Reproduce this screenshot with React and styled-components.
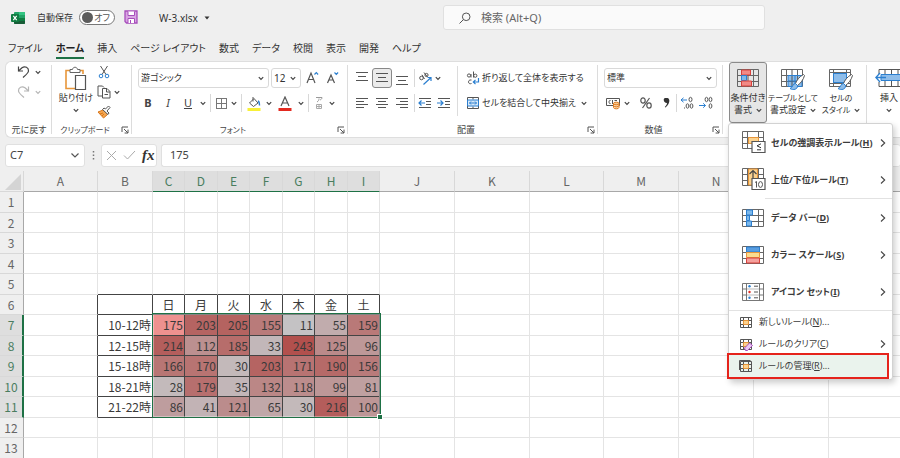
import React from "react";
import styled, { createGlobalStyle, css } from "styled-components";

const GlobalStyle = createGlobalStyle`
  * { box-sizing: border-box; }
  body {
    margin: 0;
    background: #efefef;
    color: #333;
    font-family: "Noto Sans", "Noto Sans CJK JP", sans-serif;
    font-size: 10px;
    font-feature-settings: "palt";
    line-height: 12px;
  }
  button, input, select {
    font: inherit;
    font-feature-settings: inherit;
    color: inherit;
    background: none;
    border: 0;
    padding: 0;
    margin: 0;
    outline: none;
  }
  svg { flex: none; }
`;

const green = "#1e7145";
const line = "#444";

const App = styled.div`
  height: 100vh;
  overflow: hidden;
  display: flex;
  flex-direction: column;
`;

/* Title bar */
const TitleBar = styled.header`
  display: grid;
  grid-template-columns: 443px minmax(0, 322px) 1fr;
  align-items: center;
  height: 35px;
  flex: none;
`;
const TitleLeft = styled.div`
  display: flex;
  align-items: center;
  padding-left: 11px;
`;
const AutoSave = styled.label`
  display: flex;
  align-items: center;
  gap: 6px;
  margin: 0 9px 0 12px;
  font-size: 9px;
`;
const Switch = styled.input.attrs({ type: "checkbox" })`
  appearance: none;
  width: 36px;
  height: 15px;
  border: 1px solid #777;
  border-radius: 8px;
  background: #fff;
  display: flex;
  align-items: center;
  padding: 0 4px 0 2px;
  justify-content: space-between;
  &::before {
    content: "";
    width: 11px;
    height: 11px;
    border-radius: 50%;
    background: #5c5c5c;
  }
  &::after {
    content: "オフ";
    font-size: 9px;
    color: #555;
  }
`;
const FileName = styled.button`
  display: flex;
  align-items: center;
  gap: 6px;
  margin-left: 21px;
`;
const Search = styled.label`
  display: flex;
  align-items: center;
  gap: 10px;
  height: 25px;
  padding: 0 15px;
  background: #fafafa;
  border: 1px solid #e0e0e0;
  border-radius: 3px;
  input { flex: 1; min-width: 0; font-size: 11px; }
  input::placeholder { color: #666; opacity: 1; }
`;

/* Tabs */
const Tabs = styled.nav`
  display: flex;
  gap: 13px;
  height: 26px;
  padding: 4px 8px 0;
  flex: none;
`;
const Tab = styled.a`
  color: #333;
  text-decoration: none;
  font-size: 10px;
  line-height: 18px;
  height: 20px;
  white-space: nowrap;
  ${(p) => p.$active && css`font-weight: 700; border-bottom: 2px solid ${green}; color: #222;`}
`;

/* Ribbon */
const Ribbon = styled.div`
  display: flex;
  height: 77px;
  flex: none;
  margin-left: 5px;
  background: #fff;
  border: 1px solid #dedede;
  border-right: 0;
  border-radius: 6px 0 0 6px;
`;
const Group = styled.section`
  display: flex;
  flex-direction: column;
  flex: none;
  width: ${(p) => p.$w}px;
  position: relative;
  &::after {
    content: "";
    position: absolute;
    right: 0;
    top: 3px;
    bottom: 3px;
    width: 1px;
    background: #dcdcdc;
  }
`;
const GroupBody = styled.div`
  display: flex;
  flex: 1;
  padding-left: ${(p) => p.$pad || 0}px;
`;
const GroupLabel = styled.div`
  display: flex;
  justify-content: center;
  align-items: center;
  height: 15px;
  font-size: ${(p) => (p.$kana ? 8 : 9)}px;
  color: #444;
  white-space: nowrap;
  span { flex: 1; text-align: center; }
  button { display: flex; justify-content: center; flex: none; width: 14px; }
`;
const Rows = styled.div`
  display: flex;
  flex-direction: column;
  gap: 5px;
  padding-top: 6px;
  flex: none;
  ${(p) => p.$divided && css`
    width: 106px;
    background: linear-gradient(#dcdcdc, #dcdcdc) right 4px / 1px 50px no-repeat;
  `}
`;
const Row = styled.div`
  display: flex;
  align-items: center;
  height: 20px;
  gap: ${(p) => p.$gap || 0}px;
`;
const Tool = styled.button`
  display: flex;
  align-items: center;
  justify-content: center;
  flex: none;
  width: ${(p) => p.$w || 20}px;
  height: 20px;
  color: #444;
  font-size: 11px;
  ${(p) => p.$on && css`background: #ebebeb; border: 1px solid #888; border-radius: 3px;`}
`;
const TextTool = styled.button`
  display: flex;
  align-items: center;
  gap: 2px;
  height: 20px;
  min-width: ${(p) => p.$w || 0}px;
  font-size: 9px;
  white-space: nowrap;
`;
const Divider = styled.span`
  width: 1px;
  height: 18px;
  margin: 0 2px;
  background: #d8d8d8;
`;
const SelectBox = styled.div`
  display: flex;
  align-items: center;
  height: 20px;
  width: ${(p) => p.$w}px;
  padding: 0 4px 0 2px;
  border: 1px solid #d9d9d9;
  border-radius: 3px;
  background: #fff;
  font-size: ${(p) => (p.$kana ? 9 : 10)}px;
  select { appearance: none; flex: 1; min-width: 0; height: 100%; }
  svg { pointer-events: none; }
`;
const Stack = styled.div`
  display: flex;
  flex-direction: column;
`;
const SmallTool = styled(Tool)`
  width: ${(p) => p.$w || 16}px;
`;
const BigTool = styled.button`
  display: flex;
  flex-direction: column;
  align-items: center;
  flex: none;
  width: ${(p) => p.$w}px;
  height: 61px;
  padding-top: 4px;
  font-size: 9px;
  line-height: 12px;
  white-space: nowrap;
  border: 1px solid transparent;
  ${(p) => p.$on && css`background: #e6e6e6; border-color: #8a8a8a; border-radius: 3px;`}
`;
const BigIcon = styled.span`
  display: flex;
  align-items: center;
  justify-content: center;
  height: 22px;
  margin-bottom: 3px;
`;
const BigLabel = styled.span`
  display: flex;
  align-items: center;
  justify-content: center;
  gap: 4px;
  height: 12px;
  font-size: ${(p) => (p.$kana ? 8 : 9)}px;
`;
const Anchor = styled.div`
  position: relative;
  flex: none;
`;

/* Drop-down menu */
const Menu = styled.div`
  position: absolute;
  z-index: 5;
  top: 61px;
  left: -1px;
  width: 165px;
  background: #fff;
  border: 1px solid #d2d2d2;
  border-radius: 3px;
  box-shadow: 2px 3px 6px rgba(0, 0, 0, 0.2);
`;
const MenuItem = styled.button`
  display: flex;
  align-items: center;
  width: 100%;
  height: ${(p) => (p.$small ? 22 : 37)}px;
  padding: ${(p) => (p.$small ? "0 6px 0 10px" : "0 6px 0 13px")};
  gap: ${(p) => (p.$small ? 6 : 4)}px;
  font-weight: ${(p) => (p.$small ? 400 : 700)};
  font-size: 9px;
  white-space: nowrap;
  text-align: left;
  color: #3c3c3c;
  span { flex: 1; }
  ${(p) => p.$marked && css`
    width: 162px;
    height: 26px;
    margin: -2px 0 0 -2px;
    padding-left: 10px;
    background: #eaf3ed;
    border: 2px solid #e5231b;
  `}
`;
const MenuRule = styled.hr`
  height: 1px;
  border: 0;
  margin: 0 0 0 ${(p) => p.$inset || 0}px;
  background: #e2e2e2;
`;

/* Formula bar */
const FormulaBar = styled.div`
  display: flex;
  align-items: center;
  height: 33px;
  flex: none;
  padding-left: 5px;
  padding-top: 1px;
  color: #444;
`;
const Box = styled.div`
  display: flex;
  align-items: center;
  height: 23px;
  background: #fff;
  border: 1px solid #e0e0e0;
  border-radius: 3px;
  ${(p) => (p.$w ? css`width: ${p.$w}px; flex: none;` : css`flex: 1; border-right: 0; margin-left: 4px;`)}
  padding: 0 ${(p) => p.$pad}px;
  input { flex: 1; min-width: 0; font-size: 11px; }
  button { display: flex; }
`;
const Dots = styled.span`
  width: 16px;
  display: flex;
  justify-content: center;
`;
const FxButton = styled.button`
  font-family: "Liberation Serif", serif;
  font-style: italic;
  font-weight: 700;
  font-size: 15px;
  color: #333;
`;

/* Sheet */
const SheetArea = styled.main`
  flex: 1;
  min-height: 0;
  overflow: hidden;
  background: #fff;
`;
const Sheet = styled.table`
  table-layout: fixed;
  border-collapse: separate;
  border-spacing: 0;
  width: max-content;
  font-family: "Noto Sans CJK JP", sans-serif;
  font-feature-settings: normal;
  font-size: 12px;
  line-height: 14px;
`;
const SheetRow = styled.tr`
  height: ${(p) => (p.$alt ? 20 : 21)}px;
`;
const Head = styled.th`
  padding: 0;
  font-weight: 400;
  color: ${(p) => (p.$on ? "#4a7d5f" : "#666")};
  background: ${(p) => (p.$on ? "#dedede" : "#efefef")};
  border-right: 1px solid #d8d8d8;
  border-bottom: 1px solid #d8d8d8;
  ${(p) => p.$axis === "col" && css`border-bottom: 1px solid ${p.$on ? green : "#a8a8a8"};`}
  ${(p) => p.$axis === "row" && css`
    border-right: ${p.$on ? 2 : 1}px solid ${p.$on ? green : "#a8a8a8"};
    padding-right: ${p.$on ? 0 : 1}px;
  `}
`;
const Corner = styled.div`
  width: 0;
  height: 0;
  margin: 2px 2px 0 auto;
  border-left: 16px solid transparent;
  border-bottom: 16px solid #d4d4d4;
`;
const Cell = styled.td`
  position: relative;
  padding: 0 ${(p) => (p.$align === "center" ? 0 : 1)}px 0 0;
  text-align: ${(p) => p.$align || "right"};
  color: #3a3a3a;
  white-space: nowrap;
  background: ${(p) => p.$fill || "#fff"};
  border-right: 1px solid ${(p) => (p.$right ? line : "#e4e4e4")};
  border-bottom: 1px solid ${(p) => (p.$bottom ? line : "#e4e4e4")};
`;
const Selection = styled.div`
  position: absolute;
  z-index: 1;
  top: -2px;
  left: -1px;
  width: 229px;
  height: 105px;
  border: 1px solid ${green};
  box-shadow: inset 0 0 0 1px rgba(255, 255, 255, 0.35);
  &::after {
    content: "";
    position: absolute;
    right: -2px;
    bottom: -2px;
    width: 4px;
    height: 4px;
    background: ${green};
    outline: 1px solid #fff;
  }
`;

/* Icons */
const Ic = ({ w = 14, h = 14, children, vb }) => (
  <svg width={w} height={h} viewBox={vb || `0 0 ${w} ${h}`} fill="none" stroke="#555" strokeWidth="1" aria-hidden="true">
    {children}
  </svg>
);
const Chevron = ({ color = "#444" }) => (
  <Ic w={6} h={5}><path d="M0.8 1.2 3 3.5 5.2 1.2" stroke={color} strokeWidth="1.2" /></Ic>
);
const Right = () => (
  <Ic w={6} h={10}><path d="M1 1.5 4.7 5 1 8.5" stroke="#444" strokeWidth="1.1" /></Ic>
);
const Drop = ({ label, color }) => (
  <Tool $w={10} aria-label={label}><Chevron color={color} /></Tool>
);
const Launcher = ({ label }) => (
  <button aria-label={label}>
    <Ic w={8} h={8}><path d="M1 6V1h6M3 3l4 4M7 3.6V7H3.6" /></Ic>
  </button>
);
const Lines = ({ rows, h = 14 }) => (
  <Ic w={12} h={h}>
    {rows.map(([x1, x2, y]) => <path key={y} d={`M${x1} ${y}.5H${x2}`} stroke="#555" />)}
  </Ic>
);
const ExcelIcon = () => (
  <Ic w={14} h={14}>
    <g stroke="none">
      <rect x="3" y="1" width="11" height="12" rx="1" fill="#21a366" />
      <path d="M8 1h5a1 1 0 0 1 1 1v2H8z" fill="#33c481" />
      <path d="M3 7h11v5a1 1 0 0 1-1 1H4a1 1 0 0 1-1-1z" fill="#185c37" />
      <path d="M8 7h6v3H8z" fill="#107c41" />
      <rect x="0" y="3" width="8" height="8" rx="1" fill="#107c41" />
    </g>
    <path d="M2.3 4.8 5.7 9.2M5.7 4.8 2.3 9.2" stroke="#fff" strokeWidth="1.2" />
  </Ic>
);
const SaveIcon = () => (
  <Ic w={14} h={14}>
    <path d="M1 1h12v12H2.5L1 11.5z" fill="#d9a5e3" stroke="#a64dbb" strokeWidth="1.3" />
    <path d="M4 1.5v4h6.500v-4" fill="#fff" stroke="#a64dbb" />
    <path d="M4 13V8.500h6.500V13" fill="#fff" stroke="#a64dbb" />
    <path d="M6.500 10v3" stroke="#a64dbb" />
  </Ic>
);
const UndoIcon = ({ flip, color }) => (
  <Ic w={13} h={14} vb="0 0 13 14">
    <g transform={flip ? "translate(13 0) scale(-1 1)" : undefined} stroke={color} strokeWidth="1.2">
      <path d="M1.500 1.500v4.500H6" />
      <path d="M1.500 6 5 2.800C8 .5 11.800 2.500 11.500 6c-.2 2-1.500 3-5.500 6.500" />
    </g>
  </Ic>
);
const PasteIcon = () => (
  <Ic w={24} h={25}>
    <path d="M6 4.500H2v18h9M16 4.500h3V8" stroke="#e8963a" strokeWidth="1.600" />
    <path d="M6 6.500v-3h2.500c.3-3 4.700-3 5 0H16v3z" fill="#fff" stroke="#666" />
    <path d="M11.500 9.500h10v14h-10z" fill="#fff" stroke="#555" strokeWidth="1.200" />
  </Ic>
);
const CutIcon = () => (
  <Ic w={12} h={14}>
    <path d="M2.500 1 8 9.500M9.500 1 4 9.500" />
    <circle cx="3" cy="11" r="1.800" stroke="#2b7fd0" />
    <circle cx="9" cy="11" r="1.800" stroke="#2b7fd0" />
  </Ic>
);
const CopyIcon = () => (
  <Ic w={14} h={14}>
    <path d="M5 11H1V1h4.500l1.500 1.500" />
    <path d="M5.500 3.500h4.500l3 3V13H5.500z" fill="#fff" />
    <path d="M9.500 3.500V7H13M7.500 9.500h3.500" />
  </Ic>
);
const BrushIcon = () => (
  <Ic w={14} h={14}>
    <path d="m1 7 5-2 4.500 4.500L6.500 13z" fill="#f3a650" stroke="#d9761a" />
    <path d="m5.500 4.500 5.500 5 1-1.500-2-2 3-3.500-1.500-1.500-3 3-1.500-1z" fill="#fff" />
    <path d="m3 9 3-1M5 11l2-2" stroke="#d9761a" />
  </Ic>
);
const BordersIcon = () => (
  <Ic w={13} h={13}><path d="M1 1.500h11M1 11.500h11M1.500 1v11M11.500 1v11M6.500 1v11M1 6.500h11" stroke="#777" /></Ic>
);
const FillIcon = () => (
  <Ic w={14} h={15}>
    <path d="m2.500 7 4.500-4.500L11 7 6.500 10.500z" /><path d="M6 1v4.500" />
    <path d="M11 5c1.500.5 1.500 2 1.500 4.500" stroke="#2b7fd0" strokeWidth="1.400" />
    <rect x="0.500" y="12" width="13" height="3" fill="#f8f037" stroke="none" />
  </Ic>
);
const FontColorIcon = () => (
  <Ic w={14} h={15}>
    <path d="m3 10 4-9 4 9M4.500 7h5" strokeWidth="1.200" />
    <rect x="0.500" y="12" width="13" height="3" fill="#e3291f" stroke="none" />
  </Ic>
);
const FontSizeIcon = ({ up }) => (
  <Ic w={13} h={14}>
    <path d={up ? "m1 12 4-10 4 10M2.500 8.500h5" : "m1.500 12 3.500-8 3.500 8M3 9h4"} strokeWidth="1.200" />
    <path d={up ? "m8.500 3.500 1.800-1.800 1.800 1.800" : "m8.500 1.500 1.800 1.800 1.800-1.800"} stroke="#2b7fd0" strokeWidth="1.200" />
  </Ic>
);
const PhoneticIcon = () => (
  <Ic w={10} h={14}>
    <path d="M2 1.500h6c0 1.500-1 2-2 2.500M5 2.500C5 4 4.500 5 3 6" stroke="#999" />
    <path d="M2.500 8.500h5v4h-5zM2 10.500h6M5 8v5" stroke="#aaa" />
  </Ic>
);
const OrientIcon = () => (
  <Ic w={15} h={15}>
    <circle cx="3.500" cy="7" r="1.800" /><path d="m4 3.800 2.500 4.200M6 1.500l3.500 4.500" />
    <circle cx="8.500" cy="4" r="1.600" />
    <path d="M5.500 13.500 13 6.500M9.500 6.500h3.500v3.500" stroke="#2b7fd0" strokeWidth="1.200" />
  </Ic>
);
const IndentIcon = ({ out }) => (
  <Ic w={14} h={12}>
    <path d="M1 1.500h12M8 4.500h5M8 7.500h5M1 10.500h12" />
    <path d={out ? "M1 6h6M3.500 3.500 1 6l2.500 2.500" : "M0 6h6M3.500 3.500 6 6 3.500 8.500"} stroke="#2b7fd0" strokeWidth="1.200" />
  </Ic>
);
const WrapIcon = () => (
  <Ic w={14} h={14}>
    <circle cx="3" cy="4.500" r="1.600" /><path d="M5 3v3.500M7.500.5v6" />
    <circle cx="9.300" cy="4.700" r="1.600" /><path d="M5.500 9c-4-1-4 5 0 3.500" />
    <path d="M12.500 7v4H7.500M9.500 8.800 7.300 11l2.200 2.200" stroke="#2b7fd0" strokeWidth="1.200" />
  </Ic>
);
const MergeIcon = () => (
  <Ic w={14} h={14}>
    <path d="M1.500 1.500h11v11h-11zM7 1.500v2M7 10.500v2" />
    <path d="M1.500 4h11v6h-11z" fill="#d6e8f8" stroke="#2b7fd0" />
    <path d="M3.500 7h7M5 5.500 3.500 7 5 8.500M9 5.500 10.500 7 9 8.500" stroke="#2b7fd0" />
  </Ic>
);
const CurrencyIcon = () => (
  <Ic w={14} h={14}>
    <path d="M.5 2.500h13v7H.5z" /><path d="M4.500 4.500c-2-1-2 4 0 3M6.500 4v4M8.500 4.500H11" />
    <path d="M7.500 7.500v4c0 1.800 5.500 1.800 5.500 0v-4z" fill="#fbd9b0" stroke="#e07b20" />
    <ellipse cx="10.250" cy="7.500" rx="2.800" ry="1.300" fill="#f9c78a" stroke="#e07b20" />
    <path d="M7.500 9.500c0 1.800 5.500 1.800 5.500 0" stroke="#e07b20" />
  </Ic>
);
const PercentIcon = () => (
  <Ic w={14} h={14}>
    <ellipse cx="4" cy="4.500" rx="2.200" ry="2.600" strokeWidth="1.200" />
    <ellipse cx="10" cy="9.500" rx="2.200" ry="2.600" strokeWidth="1.200" />
    <path d="M10.500 2 3.500 12" strokeWidth="1.200" />
  </Ic>
);
const CommaIcon = () => (
  <Ic w={8} h={12}><path d="M2 1h2.500C7 1.500 7.500 6 2.500 10.500L1.800 10C3.500 8 4 7 4 6 .5 6-.2 1.800 2 1z" fill="#333" stroke="none" /></Ic>
);
const DecimalIcon = ({ more }) => (
  <Ic w={14} h={14}>
    {!more && <><ellipse cx="10.500" cy="3.500" rx="1.500" ry="2.200" /><path d="M1 4h6M3.500 1.800 1 4l2.500 2.200" stroke="#2b7fd0" /></>}
    {more && <><ellipse cx="7.500" cy="3.500" rx="1.400" ry="2.200" /><ellipse cx="11.500" cy="3.500" rx="1.400" ry="2.200" /><path d="M0 9.500h6.500M4.200 7.300l2.300 2.200-2.300 2.200" stroke="#2b7fd0" /></>}
    {!more && <ellipse cx="7.500" cy="10" rx="1.400" ry="2.200" />}
    <ellipse cx="11.500" cy="10" rx="1.400" ry="2.200" />
    {!more && <path d="M4 12h1" />}
  </Ic>
);
const Grid = ({ w = 22, h = 18 }) => (
  <path
    d={`M.5.5h${w - 1}v${h - 1}H.5zM.5 ${Math.round(h / 3)}.5h${w - 1}M.5 ${Math.round((h * 2) / 3)}.5h${w - 1}M5.500.5v${h - 1}M${w - 5.5}.5v${h - 1}`}
    stroke="#666"
  />
);
const CondIcon = () => (
  <Ic w={22} h={18}>
    <Grid />
    <path d="M11 .5v17" />
    <path d="M4.500 1h9v5h-9z" fill="#f08a86" stroke="#d8403b" />
    <path d="M4.500 6.500h5v5h-5z" fill="#7db8ea" stroke="#2b7fd0" />
    <path d="M4.500 12h10v5h-10z" fill="#f08a86" stroke="#d8403b" />
  </Ic>
);
const Brush = () => (
  <>
    <path d="M22.500 5.500c-4 2-7 6-8 9l2 2c3-2 6-6 7-10z" fill="#fff" stroke="#555" />
    <path d="M14.500 14.500c-3 0-2.500 4-5.500 5 3 2 8 1 7.500-3z" fill="#8ebdea" stroke="#2b7fd0" />
  </>
);
const TableIcon = () => (
  <Ic w={24} h={24} vb="0 -3 24 24">
    <path d="M7 6h14v11H7z" fill="#8ebdea" stroke="none" />
    <Grid />
    <path d="M11 .5v17" />
    <path d="M7 6.500h14v11H7zM14 6v11M7 12h14" stroke="#2b7fd0" />
    <Brush />
  </Ic>
);
const CellStyleIcon = () => (
  <Ic w={24} h={24} vb="0 -3 24 24">
    <path d="M.5.500h21v17H.5zM.5 3.500h21M.5 14.500h21M4.500.5v17M17.500.5v17" stroke="#666" />
    <path d="M4.500 4.500h13v9h-13z" fill="#8ebdea" stroke="#2b7fd0" />
    <Brush />
  </Ic>
);
const InsertIcon = () => (
  <Ic w={28} h={18}>
    <path d="M4 5V.5h23v17H4V13M10 .5v17M16.500 .5v17M23 .5v17" />
    <path d="M6 5.500h22v6H6z" fill="#8ebdea" stroke="#2b7fd0" />
    <path d="M1 8.500h10M5 4 .8 8.500 5 13" stroke="#2b7fd0" strokeWidth="1.300" />
  </Ic>
);
const HighlightIcon = ({ top }) => (
  <Ic w={25} h={23}>
    <Grid />
    {top
      ? <path d="M6.500 1h9v16h-9z" fill="#fbd28f" stroke="#e8963a" />
      : <path d="M6.500 6.500h10v6h-10z" fill="#fbd28f" stroke="#e8963a" />}
    {top && <path d="M11 12V2.500M7.500 6 11 2.500 14.500 6" stroke="#444" strokeWidth="1.200" />}
    <path d="M10 10.500h13v11H10z" fill="#fff" stroke="#555" strokeWidth="1.200" />
    {top
      ? <><path d="M13 14.500l1.500-1v6" /><ellipse cx="18.500" cy="16.500" rx="2" ry="2.900" /></>
      : <path d="m19 12.800-4 2 4 2M15 18.800h4" stroke="#333" />}
  </Ic>
);
const DataBarIcon = () => (
  <Ic w={25} h={18}>
    <Grid />
    <path d="M4.500 1h6v5h-6zM4.500 6.500h3v5h-3zM4.500 12h5v5h-5z" fill="#7db8ea" stroke="#2b7fd0" />
  </Ic>
);
const ScaleIcon = () => (
  <Ic w={25} h={18}>
    <Grid />
    <path d="M4.500 1h13v5h-13z" fill="#5a9ee0" stroke="#2b7fd0" />
    <path d="M4.500 6.500h13v5h-13z" fill="#fbdc8f" stroke="#e8963a" />
    <path d="M4.500 12h13v5h-13z" fill="#f5a09c" stroke="#d8403b" />
  </Ic>
);
const IconSetIcon = () => (
  <Ic w={25} h={18}>
    <path d="M.5.500h21v17H.5zM.5 6h21M.5 12h21M4.500.5v17M17.500.5v17" stroke="#777" />
    <path d="M5 1h12v4.500H5zM5 6.500h12v5H5zM5 12.500h12V17H5z" fill="#fff" stroke="none" />
    <g stroke="none"><circle cx="7.500" cy="3.200" r="1.200" fill="#2b7fd0" /><circle cx="7.500" cy="9" r="1.200" fill="#e3291f" /><circle cx="7.500" cy="14.800" r="1.200" fill="#2b7fd0" /></g>
    <path d="M12 3.200h4M12 9h4M12 14.800h4" />
  </Ic>
);
const RuleIcon = ({ kind }) => (
  <Ic w={14} h={13}>
    {kind === "manage" && <path d="M.5 10V.5h11" />}
    <path d="M4 4.500h6v4H4z" fill="#fbd28f" stroke="none" />
    <path d="M1.500 1.500h11v10h-11zM1.500 4.500h11M1.500 8.500h11M4.500 1.500v10M9.500 1.500v10" />
    <path d="M4.500 4.500h5v4h-5z" stroke="#e8963a" />
    {kind === "clear" && <path d="m5.500 10 5-5 3 2.500-5 5H6.500z" fill="#e9c8f2" stroke="#a64dbb" />}
  </Ic>
);

/* Data */
const tabs = ["ファイル", "ホーム", "挿入", "ページ レイアウト", "数式", "データ", "校閲", "表示", "開発", "ヘルプ"];
const columns = [
  ["A", 74], ["B", 55], ["C", 32], ["D", 33], ["E", 32], ["F", 33], ["G", 32], ["H", 33], ["I", 32],
  ["J", 75], ["K", 75], ["L", 74], ["M", 75], ["N", 75], ["O", 75], ["P", 75], ["Q", 75], ["R", 75],
];
const table = {
  6: ["", "日", "月", "火", "水", "木", "金", "土"],
  7: ["10-12時", 175, 203, 205, 155, 11, 55, 159],
  8: ["12-15時", 214, 112, 185, 33, 243, 125, 96],
  9: ["15-18時", 166, 170, 30, 203, 171, 190, 156],
  10: ["18-21時", 28, 179, 35, 132, 118, 99, 81],
  11: ["21-22時", 86, 41, 121, 65, 30, 216, 100],
};
const rows = Array.from({ length: 24 }, (_, i) => i + 1);
const mix = (a, b, t) => Math.round(a + (b - a) * t);
const heat = (v) => {
  const t = (v - 11) / 232;
  return `rgb(${mix(196, 178, t)}, ${mix(194, 80, t)}, ${mix(196, 77, t)})`;
};

function SheetCell({ row, col }) {
  const value = col >= 1 && col <= 8 ? table[row]?.[col - 1] : undefined;
  const inRows = row >= 6 && row <= 11;
  const numeric = typeof value === "number";
  const active = row === 7 && col === 2;
  return (
    <Cell
      $right={inRows && col <= 8}
      $bottom={row >= 5 && row <= 11 && col >= 1 && col <= 8}
      $align={row === 6 ? "center" : "right"}
      $fill={active ? "#ee918f" : numeric ? heat(value) : undefined}
    >
      {value}
      {active && <Selection />}
    </Cell>
  );
}

const menuLarge = [
  ["セルの強調表示ルール", "H", <HighlightIcon />],
  ["上位/下位ルール", "T", <HighlightIcon top />],
  ["データ バー", "D", <DataBarIcon />],
  ["カラー スケール", "S", <ScaleIcon />],
  ["アイコン セット", "I", <IconSetIcon />],
];

function ConditionalMenu() {
  return (
    <Menu role="menu">
      {menuLarge.map(([text, key, icon], i) => (
        <React.Fragment key={key}>
          <MenuItem role="menuitem">{icon}<span>{text}(<u>{key}</u>)</span><Right /></MenuItem>
          {i === 1 && <MenuRule $inset={36} />}
        </React.Fragment>
      ))}
      <MenuRule />
      <MenuItem $small role="menuitem"><RuleIcon /><span>新しいルール(<u>N</u>)...</span></MenuItem>
      <MenuItem $small role="menuitem"><RuleIcon kind="clear" /><span>ルールのクリア(<u>C</u>)</span><Right /></MenuItem>
      <MenuItem $small $marked role="menuitem"><RuleIcon kind="manage" /><span>ルールの管理(<u>R</u>)...</span></MenuItem>
    </Menu>
  );
}

export default function ExcelWindow() {
  return (
    <App>
      <GlobalStyle />
      <TitleBar>
        <TitleLeft>
          <ExcelIcon />
          <AutoSave>自動保存<Switch /></AutoSave>
          <button aria-label="保存"><SaveIcon /></button>
          <FileName>W-3.xlsx<Ic w={6} h={4}><path d="M.5.5h5L3 3.500z" fill="#333" stroke="none" /></Ic></FileName>
        </TitleLeft>
        <Search>
          <Ic w={12} h={12}><circle cx="7.200" cy="4.800" r="3.800" /><path d="M4.500 7.500.5 11.500" /></Ic>
          <input aria-label="検索" placeholder="検索 (Alt+Q)" />
        </Search>
      </TitleBar>

      <Tabs>
        {tabs.map((t) => <Tab key={t} href="#" $active={t === "ホーム"}>{t}</Tab>)}
      </Tabs>

      <Ribbon>
        <Group $w={46}>
          <GroupBody $pad={7}>
            <Stack>
              <Row><SmallTool $w={20} aria-label="元に戻す"><UndoIcon color="#444" /></SmallTool><Drop label="元に戻す一覧" /></Row>
              <Row><SmallTool $w={20} aria-label="やり直し"><UndoIcon flip color="#b5b5b5" /></SmallTool><Drop label="やり直し一覧" color="#b5b5b5" /></Row>
            </Stack>
          </GroupBody>
          <GroupLabel><span>元に戻す</span></GroupLabel>
        </Group>

        <Group $w={80}>
          <GroupBody $pad={4}>
            <BigTool $w={40}>
              <BigIcon><PasteIcon /></BigIcon>
              <BigLabel>貼り付け</BigLabel>
              <BigLabel><Chevron /></BigLabel>
            </BigTool>
            <Stack>
              <Row><SmallTool aria-label="切り取り"><CutIcon /></SmallTool></Row>
              <Row><SmallTool aria-label="コピー"><CopyIcon /></SmallTool><Drop label="コピーの種類" /></Row>
              <Row><SmallTool aria-label="書式のコピー"><BrushIcon /></SmallTool></Row>
            </Stack>
          </GroupBody>
          <GroupLabel $kana><span>クリップボード</span><Launcher label="クリップボードの設定" /></GroupLabel>
        </Group>

        <Group $w={216}>
          <GroupBody $pad={6}>
            <Rows>
              <Row $gap={2}>
                <SelectBox $w={131} $kana><select aria-label="フォント"><option>游ゴシック</option></select><Chevron /></SelectBox>
                <SelectBox $w={30}><select aria-label="フォント サイズ"><option>12</option></select><Chevron /></SelectBox>
                <Tool $w={18} aria-label="拡大"><FontSizeIcon up /></Tool>
                <Tool $w={18} aria-label="縮小"><FontSizeIcon /></Tool>
              </Row>
              <Row>
                <Tool aria-label="太字"><b>B</b></Tool>
                <Tool aria-label="斜体"><i>I</i></Tool>
                <Tool aria-label="下線"><u>U</u></Tool>
                <Drop label="下線の種類" />
                <Divider />
                <Tool $w={16} aria-label="罫線"><BordersIcon /></Tool>
                <Drop label="罫線の種類" />
                <Divider />
                <Tool aria-label="塗りつぶし"><FillIcon /></Tool>
                <Drop label="塗りつぶしの色" />
                <Tool $w={22} aria-label="文字色"><FontColorIcon /></Tool>
                <Drop label="文字の色" />
                <Divider />
                <Tool $w={16} aria-label="ふりがな"><PhoneticIcon /></Tool>
                <Drop label="ふりがなの設定" />
              </Row>
            </Rows>
          </GroupBody>
          <GroupLabel $kana><span>フォント</span><Launcher label="フォントの設定" /></GroupLabel>
        </Group>

        <Group $w={250}>
          <GroupBody $pad={4}>
            <Rows $divided>
              <Row>
                <Tool aria-label="上揃え"><Lines rows={[[0, 12, 1], [2, 10, 5], [0, 12, 9]]} /></Tool>
                <Tool $on aria-label="上下中央揃え"><Lines rows={[[0, 12, 2], [2, 10, 6], [0, 12, 10]]} /></Tool>
                <Tool aria-label="下揃え"><Lines rows={[[0, 12, 5], [2, 10, 9], [0, 12, 13]]} /></Tool>
                <Divider />
                <Tool $w={16} aria-label="方向"><OrientIcon /></Tool>
                <Drop label="方向の種類" />
              </Row>
              <Row>
                <Tool aria-label="左揃え"><Lines h={12} rows={[[0, 12, 1], [0, 8, 4], [0, 12, 7], [0, 8, 10]]} /></Tool>
                <Tool aria-label="中央揃え"><Lines h={12} rows={[[0, 12, 1], [2, 10, 4], [0, 12, 7], [2, 10, 10]]} /></Tool>
                <Tool aria-label="右揃え"><Lines h={12} rows={[[0, 12, 1], [4, 12, 4], [0, 12, 7], [4, 12, 10]]} /></Tool>
                <Divider />
                <Tool $w={16} aria-label="インデントを減らす"><IndentIcon out /></Tool>
                <Tool $w={22} aria-label="インデントを増やす"><IndentIcon /></Tool>
              </Row>
            </Rows>
            <GroupBody $pad={8}>
              <Rows>
                <Row><TextTool><WrapIcon />折り返して全体を表示する</TextTool></Row>
                <Row><TextTool $w={113}><MergeIcon />セルを結合して中央揃え</TextTool><Drop label="結合の種類" /></Row>
              </Rows>
            </GroupBody>
          </GroupBody>
          <GroupLabel><span>配置</span><Launcher label="配置の設定" /></GroupLabel>
        </Group>

        <Group $w={125}>
          <GroupBody $pad={6}>
            <Rows>
              <Row><SelectBox $w={113} $kana><select aria-label="表示形式"><option>標準</option></select><Chevron /></SelectBox></Row>
              <Row>
                <Tool $w={18} aria-label="通貨"><CurrencyIcon /></Tool>
                <Drop label="通貨の種類" />
                <Tool $w={28} aria-label="パーセント"><PercentIcon /></Tool>
                <Tool $w={14} aria-label="桁区切り"><CommaIcon /></Tool>
                <Divider />
                <Tool $w={16} aria-label="小数点以下を増やす"><DecimalIcon /></Tool>
                <Tool $w={22} aria-label="小数点以下を減らす"><DecimalIcon more /></Tool>
              </Row>
            </Rows>
          </GroupBody>
          <GroupLabel><span>数値</span><Launcher label="数値の設定" /></GroupLabel>
        </Group>

        <Group $w={144}>
          <GroupBody $pad={6}>
            <Anchor>
              <BigTool $w={38} $on>
                <BigIcon><CondIcon /></BigIcon>
                <BigLabel>条件付き</BigLabel>
                <BigLabel>書式<Chevron /></BigLabel>
              </BigTool>
              <ConditionalMenu />
            </Anchor>
            <BigTool $w={52}>
              <BigIcon><TableIcon /></BigIcon>
              <BigLabel $kana>テーブルとして</BigLabel>
              <BigLabel>書式設定<Chevron /></BigLabel>
            </BigTool>
            <BigTool $w={44}>
              <BigIcon><CellStyleIcon /></BigIcon>
              <BigLabel $kana>セルの</BigLabel>
              <BigLabel $kana>スタイル<Chevron /></BigLabel>
            </BigTool>
          </GroupBody>
        </Group>

        <BigTool $w={44}>
          <BigIcon><InsertIcon /></BigIcon>
          <BigLabel>挿入</BigLabel>
          <BigLabel><Chevron /></BigLabel>
        </BigTool>
      </Ribbon>

      <FormulaBar>
        <Box $w={80} $pad={4}><input aria-label="名前ボックス" defaultValue="C7" /><Ic w={10} h={7}><path d="m1.500 1.500 3.500 3.500 3.500-3.500" strokeWidth="1.200" /></Ic></Box>
        <Dots><Ic w={3} h={10}><path d="M1.500 1v1.500M1.500 4.500V6M1.500 8v1.500" stroke="#777" strokeWidth="1.500" /></Ic></Dots>
        <Box $w={56} $pad={4}>
          <Row $gap={6}>
            <button aria-label="キャンセル"><Ic w={11} h={11}><path d="m1 1 9 9M10 1 1 10" stroke="#aaa" /></Ic></button>
            <button aria-label="入力"><Ic w={13} h={10}><path d="m1 5.500 3.500 3.500L12 1" stroke="#aaa" /></Ic></button>
            <FxButton aria-label="関数の挿入">fx</FxButton>
          </Row>
        </Box>
        <Box $pad={8}><input aria-label="数式バー" defaultValue="175" /></Box>
      </FormulaBar>

      <SheetArea>
        <Sheet>
          <colgroup>
            <col width="24" />
            {columns.map(([n, w]) => <col key={n} width={w} />)}
          </colgroup>
          <thead>
            <SheetRow>
              <Head><Corner /></Head>
              {columns.map(([n], i) => <Head key={n} scope="col" $axis="col" $on={i >= 2 && i <= 8}>{n}</Head>)}
            </SheetRow>
          </thead>
          <tbody>
            {rows.map((r) => (
              <SheetRow key={r} $alt={r % 2 === 0}>
                <Head scope="row" $axis="row" $on={r >= 7 && r <= 11}>{r}</Head>
                {columns.map(([n], c) => <SheetCell key={n} row={r} col={c} />)}
              </SheetRow>
            ))}
          </tbody>
        </Sheet>
      </SheetArea>
    </App>
  );
}
